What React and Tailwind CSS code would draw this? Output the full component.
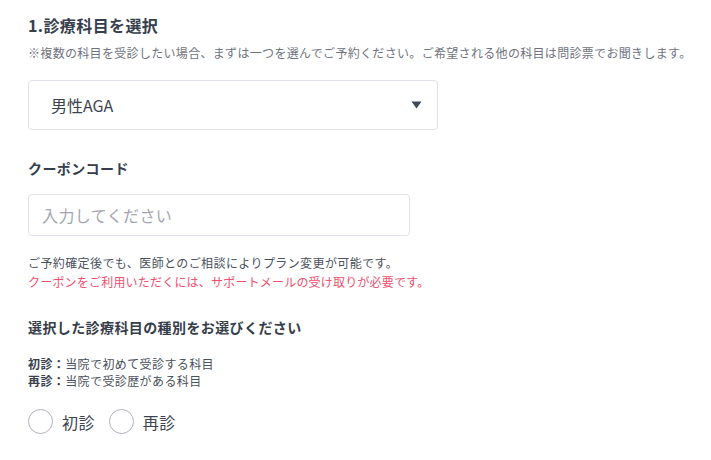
import React from 'react';

const font = { fontFamily: '"Noto Sans CJK JP", "Noto Sans", sans-serif' };

const Radio = ({ label }) => (
  <label className="flex items-center gap-[9px] cursor-pointer">
    <span className="w-[25px] h-[25px] rounded-full border border-[#b4b3c2] bg-white" />
    <span className="text-[16px] leading-[24px] text-[#3c4350]">{label}</span>
  </label>
);

export default function App() {
  const [course, setCourse] = React.useState('男性AGA');

  return (
    <div className="min-h-screen bg-white px-[28px] pt-[13px] text-[#3a4150] tracking-[0.025em]" style={font}>
      {/* Course select */}
      <h2 className="text-[16px] leading-[24px] font-bold text-[#363e4b]">1.診療科目を選択</h2>
      <p className="mt-[7px] whitespace-nowrap text-[12px] leading-[18px] tracking-[0.32px] text-[#6f7380]">
        ※複数の科目を受診したい場合、まずは一つを選んでご予約ください。ご希望される他の科目は問診票でお聞きします。
      </p>
      <div className="mt-[18px] w-[410px] h-[50px] rounded-[4px] border border-[#e2e1ea] flex items-center justify-between pl-[22px] pr-[15px]">
        <span className="text-[16px] leading-[24px] tracking-normal text-[#3c4350]">{course}</span>
        <svg width="11" height="8" viewBox="0 0 11 8" aria-hidden="true">
          <path d="M0.5 0.5h10L5.5 7.5z" fill="#3c4a5c" />
        </svg>
      </div>

      {/* Coupon */}
      <h3 className="mt-[28px] text-[14px] leading-[20px] font-bold text-[#363e4b]">クーポンコード</h3>
      <input
        className="mt-[16px] block w-[382px] h-[42px] rounded-[4px] border border-[#e2e1ea] px-[13px] text-[16px] text-[#3c4350] placeholder:text-[#a3a6b1] outline-none"
        style={font}
        placeholder="入力してください"
      />
      <p className="mt-[17px] text-[12px] leading-[19px] text-[#4a505c]">ご予約確定後でも、医師とのご相談によりプラン変更が可能です。</p>
      <p className="text-[12px] leading-[19px] tracking-[0.2px] text-[#f0506e]">クーポンをご利用いただくには、サポートメールの受け取りが必要です。</p>

      {/* Visit type */}
      <h3 className="mt-[26px] text-[14px] leading-[20px] font-bold text-[#363e4b]">選択した診療科目の種別をお選びください</h3>
      <div className="mt-[18px] text-[12px] leading-[17px] text-[#4a505c]">
        <p><span className="font-bold text-[#3a4150]">初診：</span>当院で初めて受診する科目</p>
        <p><span className="font-bold text-[#3a4150]">再診：</span>当院で受診歴がある科目</p>
      </div>
      <div className="mt-[20px] flex items-center gap-[14px]" onClick={() => setCourse(course)}>
        <Radio label="初診" />
        <Radio label="再診" />
      </div>
    </div>
  );
}
